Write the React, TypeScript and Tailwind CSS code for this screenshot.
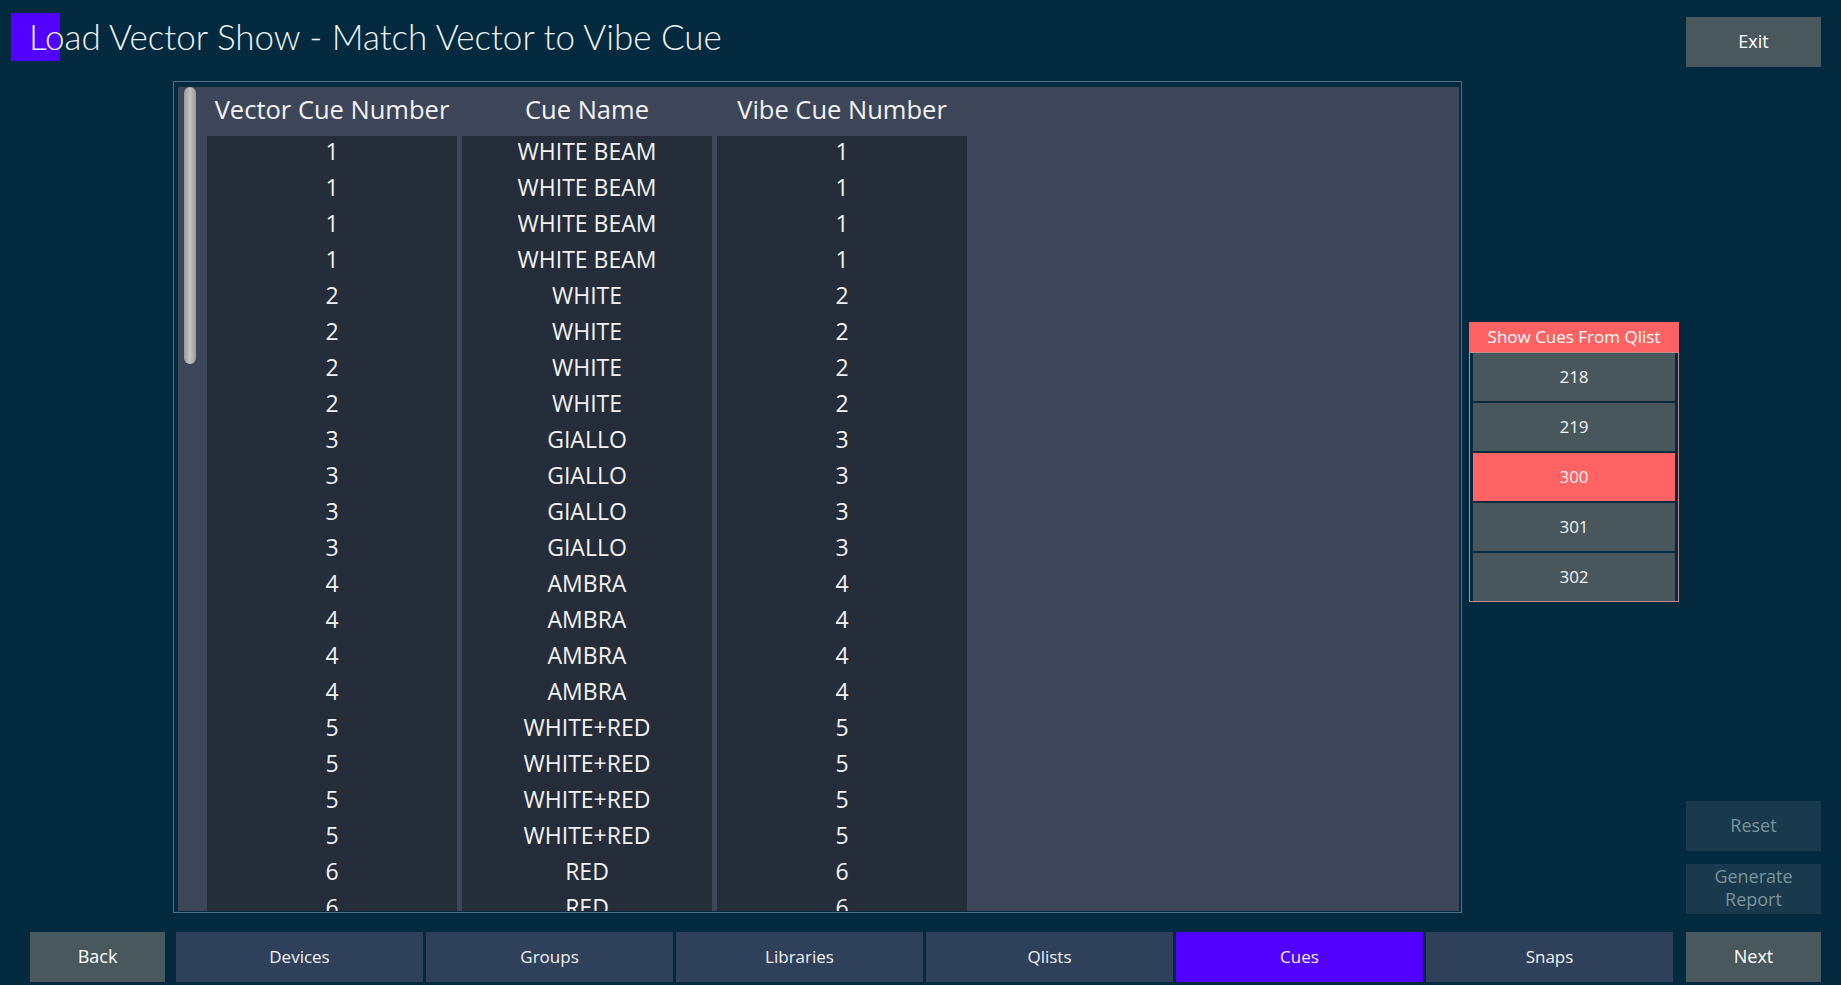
const rows: [string, string, string][] = [
  ['1', 'WHITE BEAM', '1'],
  ['1', 'WHITE BEAM', '1'],
  ['1', 'WHITE BEAM', '1'],
  ['1', 'WHITE BEAM', '1'],
  ['2', 'WHITE', '2'],
  ['2', 'WHITE', '2'],
  ['2', 'WHITE', '2'],
  ['2', 'WHITE', '2'],
  ['3', 'GIALLO', '3'],
  ['3', 'GIALLO', '3'],
  ['3', 'GIALLO', '3'],
  ['3', 'GIALLO', '3'],
  ['4', 'AMBRA', '4'],
  ['4', 'AMBRA', '4'],
  ['4', 'AMBRA', '4'],
  ['4', 'AMBRA', '4'],
  ['5', 'WHITE+RED', '5'],
  ['5', 'WHITE+RED', '5'],
  ['5', 'WHITE+RED', '5'],
  ['5', 'WHITE+RED', '5'],
  ['6', 'RED', '6'],
  ['6', 'RED', '6'],
];

const tabs = ['Devices', 'Groups', 'Libraries', 'Qlists', 'Cues', 'Snaps'];
const qlists = ['218', '219', '300', '301', '302'];

const font = { fontFamily: '"Open Sans", "Noto Sans", sans-serif' };

function Column({ index }: { index: number }) {
  return (
    <div className="w-[250px] bg-[#262d3a] overflow-hidden">
      <div className="-mt-[3px]">
        {rows.map((r, i) => (
          <div key={i} className="h-[36px] flex items-center justify-center text-[23px] text-[#f2f2f2]">
            {r[index]}
          </div>
        ))}
      </div>
    </div>
  );
}

export default function App() {
  return (
    <div className="w-[1841px] h-[985px] bg-[#042a3f] flex overflow-hidden" style={font}>
      <div className="w-[1679px] flex flex-col">
        <div className="h-[81px] relative">
          <div className="absolute left-[11px] top-[13px] w-[49px] h-[48px] bg-[#5200ff]" />
          <div
            className="absolute left-[29px] top-[12px] text-[35px] font-light text-[#eef3f6] leading-[48px] whitespace-nowrap"
            style={{ fontFamily: 'Lato, "Open Sans", sans-serif' }}
          >
            Load Vector Show - Match Vector to Vibe Cue
          </div>
        </div>

        <div className="h-[832px] flex">
          <div className="ml-[173px] w-[1289px] border border-[#4f7384] pt-[5px] pl-[4px] pr-[2px] pb-[1px]">
            <div className="h-full bg-[#3d4658] flex overflow-hidden">
              <div className="w-[29px] shrink-0">
                <div className="ml-[6px] w-[12px] h-[277px] rounded-full bg-gradient-to-r from-[#9a9a9a] via-[#c4c4c4] to-[#9a9a9a]" />
              </div>
              <div className="flex-1 flex flex-col min-h-0">
                <div className="h-[49px] pb-[4px] flex gap-[5px] text-[25.5px] text-[#f2f2f2] shrink-0">
                  <div className="w-[250px] flex items-center justify-center">Vector Cue Number</div>
                  <div className="w-[250px] flex items-center justify-center">Cue Name</div>
                  <div className="w-[250px] flex items-center justify-center">Vibe Cue Number</div>
                </div>
                <div className="flex-1 min-h-0 flex gap-[5px]">
                  <Column index={0} />
                  <Column index={1} />
                  <Column index={2} />
                </div>
              </div>
            </div>
          </div>

          <div className="ml-[7px] w-[210px] pt-[241px]">
            <div className="h-[30px] bg-[#ff6262] flex items-center justify-center text-[17px] text-white">
              Show Cues From Qlist
            </div>
            <div className="border border-[#c98a8f] px-[3px] flex flex-col gap-[2px]">
              {qlists.map((q) => (
                <div
                  key={q}
                  className={`h-[48px] flex items-center justify-center text-[17px] text-[#f2f2f2] ${
                    q === '300' ? 'bg-[#ff6363]' : 'bg-[#48575c]'
                  }`}
                >
                  {q}
                </div>
              ))}
            </div>
          </div>
        </div>

        <div className="mt-[19px] h-[50px] flex">
          <div className="ml-[30px] w-[135px] bg-[#48585d] flex items-center justify-center text-[18px] text-white pb-[1px]">
            Back
          </div>
          <div className="ml-[11px] flex gap-[3px]">
            {tabs.map((t) => (
              <div
                key={t}
                className={`w-[247px] flex items-center justify-center text-[17px] text-[#f2f2f2] pb-[1px] ${
                  t === 'Cues' ? 'bg-[#5200ff]' : 'bg-[#2e405a]'
                }`}
              >
                {t}
              </div>
            ))}
          </div>
        </div>
      </div>

      <div className="ml-[7px] w-[135px] flex flex-col">
        <div className="mt-[17px] h-[50px] bg-[#48585d] flex items-center justify-center text-[18px] text-white pb-[2px]">
          Exit
        </div>
        <div className="flex-1" />
        <div className="h-[50px] bg-[#193a4c] flex items-center justify-center text-[18px] text-[#7a929c] pb-[2px]">
          Reset
        </div>
        <div className="mt-[13px] h-[50px] bg-[#193a4c] flex items-center justify-center text-center text-[18px] leading-[23px] text-[#7a929c] pb-[2px]">
          Generate
          <br />
          Report
        </div>
        <div className="mt-[18px] mb-[3px] h-[50px] bg-[#48585d] flex items-center justify-center text-[18px] text-white pb-[1px]">
          Next
        </div>
      </div>
    </div>
  );
}
